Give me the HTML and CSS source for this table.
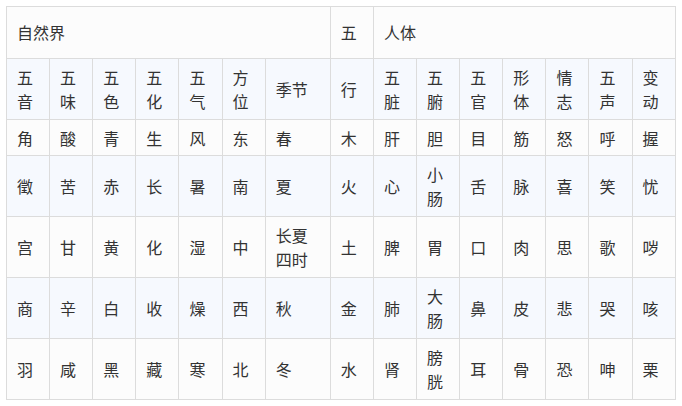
FILE: index.html
```html
<!DOCTYPE html>
<html lang="zh">
<head>
<meta charset="utf-8">
<link rel="stylesheet" href="styles.css">
</head>
<body>
<table class="wx">
  <colgroup>
    <col class="c"><col class="c"><col class="c"><col class="c"><col class="c"><col class="c"><col class="cw">
    <col class="c">
    <col class="c"><col class="c"><col class="c"><col class="c"><col class="c"><col class="c"><col class="c">
  </colgroup>
  <tr class="top">
    <td colspan="7">自然界</td>
    <td>五</td>
    <td colspan="7">人体</td>
  </tr>
  <tr class="alt">
    <td>五音</td><td>五味</td><td>五色</td><td>五化</td><td>五气</td><td>方位</td><td>季节</td>
    <td>行</td>
    <td>五脏</td><td>五腑</td><td>五官</td><td>形体</td><td>情志</td><td>五声</td><td>变动</td>
  </tr>
  <tr class="single">
    <td>角</td><td>酸</td><td>青</td><td>生</td><td>风</td><td>东</td><td>春</td>
    <td>木</td>
    <td>肝</td><td>胆</td><td>目</td><td>筋</td><td>怒</td><td>呼</td><td>握</td>
  </tr>
  <tr class="alt">
    <td>徵</td><td>苦</td><td>赤</td><td>长</td><td>暑</td><td>南</td><td>夏</td>
    <td>火</td>
    <td>心</td><td>小肠</td><td>舌</td><td>脉</td><td>喜</td><td>笑</td><td>忧</td>
  </tr>
  <tr>
    <td>宫</td><td>甘</td><td>黄</td><td>化</td><td>湿</td><td>中</td><td>长夏四时</td>
    <td>土</td>
    <td>脾</td><td>胃</td><td>口</td><td>肉</td><td>思</td><td>歌</td><td>哕</td>
  </tr>
  <tr class="alt">
    <td>商</td><td>辛</td><td>白</td><td>收</td><td>燥</td><td>西</td><td>秋</td>
    <td>金</td>
    <td>肺</td><td>大肠</td><td>鼻</td><td>皮</td><td>悲</td><td>哭</td><td>咳</td>
  </tr>
  <tr>
    <td>羽</td><td>咸</td><td>黑</td><td>藏</td><td>寒</td><td>北</td><td>冬</td>
    <td>水</td>
    <td>肾</td><td>膀胱</td><td>耳</td><td>骨</td><td>恐</td><td>呻</td><td>栗</td>
  </tr>
</table>
</body>
</html>
```
FILE: styles.css
```css
html, body {
  background: #ffffff;
}
body {
  margin: 6px;
  font-family: "Noto Sans CJK SC", "Noto Sans", sans-serif;
  font-size: 16px;
  line-height: 24px;
  color: #333333;
}
.wx {
  width: 670px;
  table-layout: fixed;
  border-collapse: collapse;
}
.wx .c {
  width: 43px;
}
.wx .cw {
  width: 65px;
}
.wx td {
  border: 1px solid #dcdcdc;
  padding: 6px 10px;
  vertical-align: middle;
  text-align: left;
  background: #fcfcfc;
  word-break: break-all;
}
.wx tr.alt td {
  background: #f6f9fe;
}
.wx tr.top td {
  padding-top: 13px;
  padding-bottom: 14px;
}
.wx tr.single td {
  padding-top: 5.5px;
  padding-bottom: 5.5px;
}
```
